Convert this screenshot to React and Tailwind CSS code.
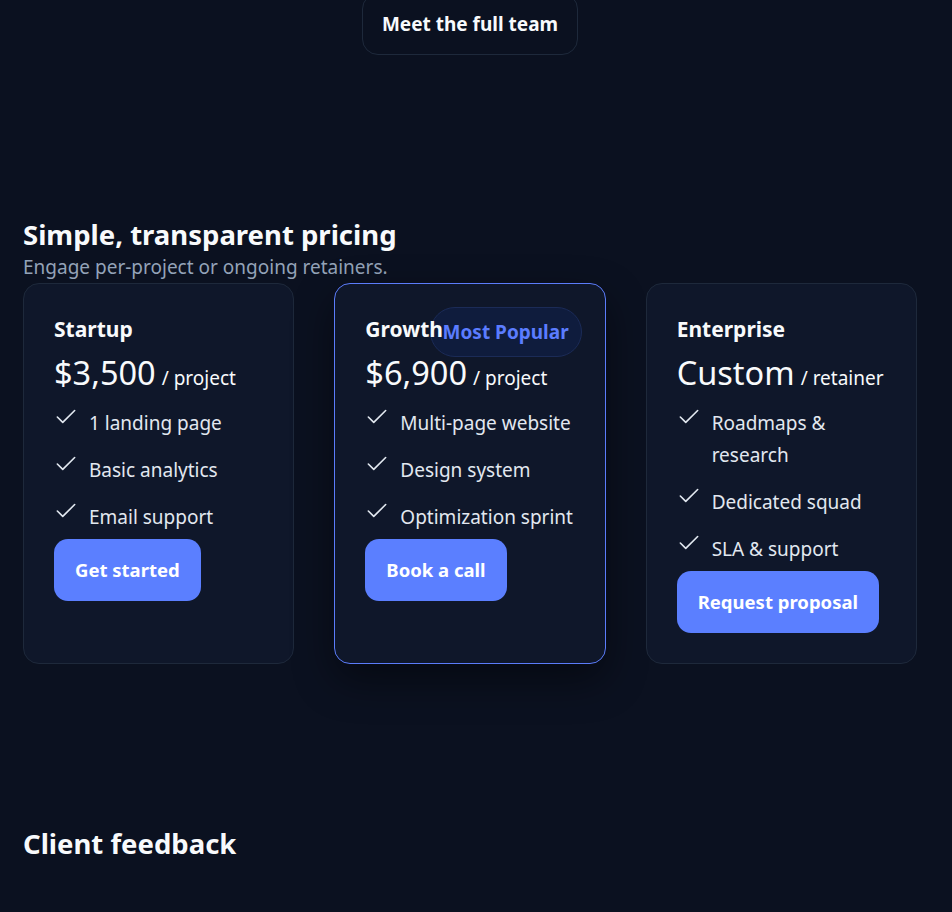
import { Check } from 'lucide-react'

const PLANS = [
  {
    name: 'Startup',
    price: '$3,500',
    unit: '/ project',
    features: ['1 landing page', 'Basic analytics', 'Email support'],
    cta: 'Get started',
  },
  {
    name: 'Growth',
    price: '$6,900',
    unit: '/ project',
    features: ['Multi-page website', 'Design system', 'Optimization sprint'],
    cta: 'Book a call',
    popular: true,
  },
  {
    name: 'Enterprise',
    price: 'Custom',
    unit: '/ retainer',
    features: ['Roadmaps & research', 'Dedicated squad', 'SLA & support'],
    cta: 'Request proposal',
  },
]

function PlanCard({ plan }) {
  return (
    <div
      className={`relative flex flex-col rounded-2xl border bg-[#0f172a] p-[30px] ${
        plan.popular
          ? 'border-[#5b7cfa] shadow-[0_16px_40px_rgba(0,0,0,0.45)]'
          : 'border-[#1e293b]'
      }`}
    >
      {plan.popular && (
        <span className="absolute right-[23px] top-[23px] rounded-full border border-[#1b2b57] bg-[#0f1c3d] px-[12px] py-[11px] text-[19px] font-bold leading-[26px] text-[#5b7cff]">
          Most Popular
        </span>
      )}
      <h3 className="relative text-[21px] font-bold leading-[30px] text-[#f8fafc]">{plan.name}</h3>
      <div className="mt-[9px] flex items-baseline gap-[6px] text-[#f8fafc]">
        <span className="text-[32.5px] leading-[40px]">{plan.price}</span>
        <span className="text-[19px]">{plan.unit}</span>
      </div>
      <ul className="mt-[14px] flex flex-col gap-[15px]">
        {plan.features.map((f) => (
          <li key={f} className="flex items-start text-[19px] leading-[32px] text-[#e2e8f0]">
            <Check
              size={26}
              strokeWidth={1.5}
              className="-ml-[1px] -mt-[3px] mr-[10px] flex-shrink-0"
            />
            <span>{f}</span>
          </li>
        ))}
      </ul>
      <div className="mt-[6px]">
        <button
          type="button"
          className="h-[62px] rounded-[14px] bg-[#5b7fff] px-[21px] text-[18.5px] font-bold text-white"
        >
          {plan.cta}
        </button>
      </div>
    </div>
  )
}

export default function App() {
  return (
    <div
      className="min-h-[912px] w-full overflow-hidden bg-[#0b1120] text-white"
      style={{ fontFamily: '"Noto Sans", "Open Sans", sans-serif' }}
    >
      <div className="w-[940px] px-[23px]">
        <div className="flex justify-center">
          <button
            type="button"
            className="-mt-[7px] h-[62px] w-[216px] rounded-2xl border border-[#1e293b] text-[19px] font-bold text-[#f8fafc]"
          >
            Meet the full team
          </button>
        </div>

        <section className="mt-[163px]">
          <h2 className="text-[27.5px] font-bold leading-[34px] text-[#f8fafc]">
            Simple, transparent pricing
          </h2>
          <p className="mt-[2px] text-[19px] leading-[26px] text-[#94a3b8]">
            Engage per-project or ongoing retainers.
          </p>
          <div className="mt-[3px] grid grid-cols-3 gap-[40px]">
            {PLANS.map((p) => (
              <PlanCard key={p.name} plan={p} />
            ))}
          </div>
        </section>

        <section className="mt-[163px]">
          <h2 className="text-[27.5px] font-bold leading-[34px] text-[#f8fafc]">Client feedback</h2>
        </section>
      </div>
    </div>
  )
}
